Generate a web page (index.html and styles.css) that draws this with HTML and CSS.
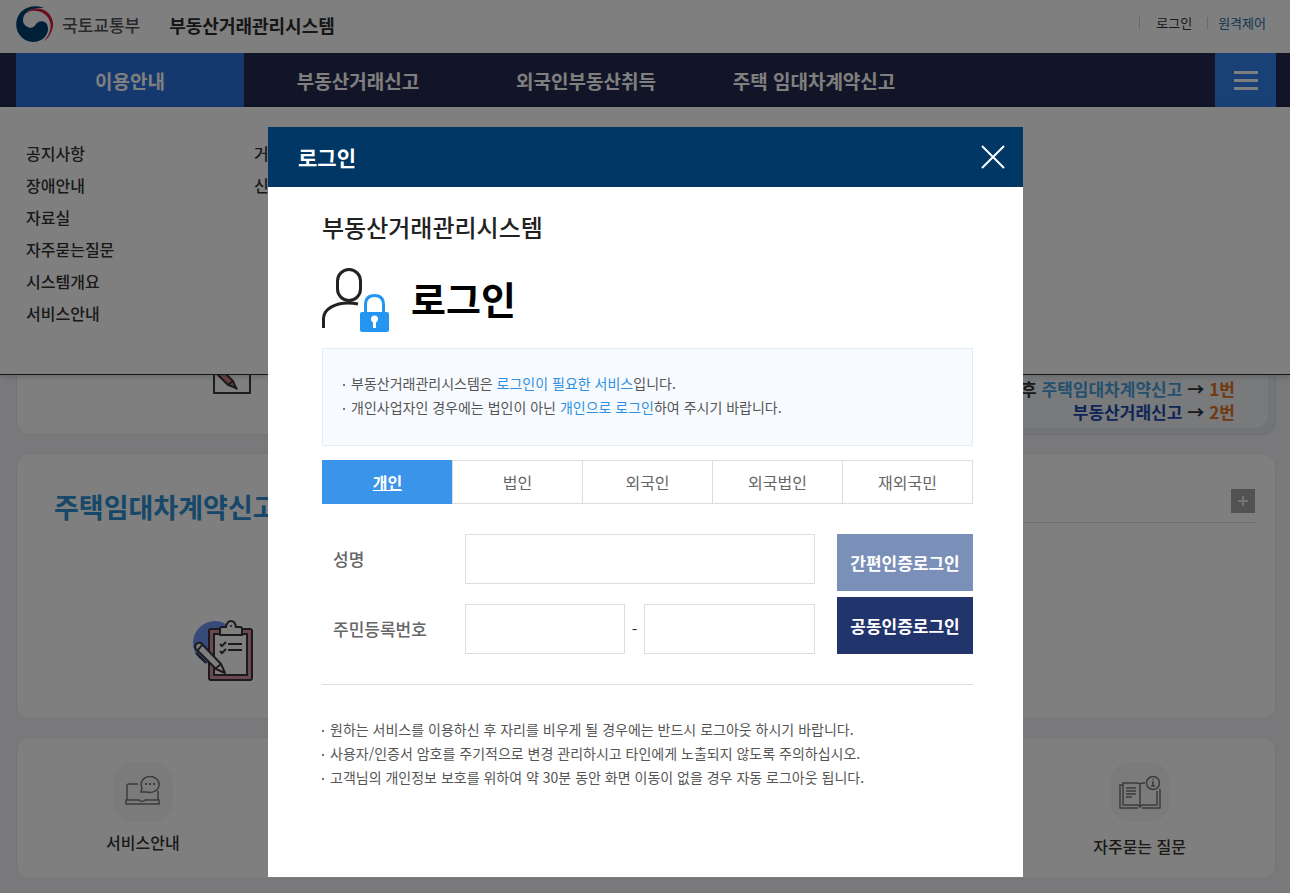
FILE: index.html
```html
<!DOCTYPE html>
<html lang="ko">
<head>
<meta charset="utf-8">
<meta name="viewport" content="width=device-width, initial-scale=1">
<title>부동산거래관리시스템</title>
<link rel="stylesheet" href="styles.css">
</head>
<body>
<header class="site-header">
  <div class="top-bar">
    <a class="brand" href="#">
      <svg class="emblem" viewBox="0 0 38 38" aria-hidden="true">
        <path fill="#00406e" d="M28 2C20-1 11 0 5 6-1 12-1 22 3 28c5 8 15 10 22 6 7-4 9-12 5-17-3-3-8-2-10 1-2 4-6 5-10 2-4-3-4-9 0-13 5-5 12-5 18-5z"/>
        <path fill="#d01c3c" d="M8 9C13 3 21 1 28 4c8 4 11 13 8 20-2 6-5 9-9 12 6-6 9-14 7-20-2-7-8-11-14-11-5-1-9 1-12 4z"/>
      </svg>
      <span class="ministry">국토교통부</span>
      <span class="system-name">부동산거래관리시스템</span>
    </a>
    <nav class="util">
      <a href="#">로그인</a>
      <a class="remote" href="#">원격제어</a>
    </nav>
  </div>
  <nav class="gnb">
    <a class="gnb-item current" href="#">이용안내</a>
    <a class="gnb-item" href="#">부동산거래신고</a>
    <a class="gnb-item" href="#">외국인부동산취득</a>
    <a class="gnb-item" href="#">주택 임대차계약신고</a>
    <button class="all-menu" type="button" aria-label="전체메뉴"><span></span><span></span><span></span></button>
  </nav>
  <div class="submenu">
    <ul>
      <li><a href="#">공지사항</a></li>
      <li><a href="#">장애안내</a></li>
      <li><a href="#">자료실</a></li>
      <li><a href="#">자주묻는질문</a></li>
      <li><a href="#">시스템개요</a></li>
      <li><a href="#">서비스안내</a></li>
    </ul>
    <ul>
      <li><a href="#">거래</a></li>
      <li><a href="#">신고</a></li>
    </ul>
  </div>
</header>

<main class="content">
  <section class="row row-report">
    <div class="card report-card">
      <svg class="report-icon" viewBox="0 0 38 60" aria-hidden="true">
        <rect x="1" y="1" width="36" height="58" fill="none" stroke="#3c3c40" stroke-width="2"/>
        <path d="M2 38l5-4 13 13 3 7-8-3z" fill="#c98088" stroke="#333" stroke-width="2"/>
        <path d="M15 51l5-4M22 53l2 2" stroke="#333" stroke-width="2"/>
      </svg>
    </div>
    <div class="card phone-card">
      <div class="phone-panel">
        <p><span>후</span> <span class="sky">주택임대차계약신고</span> <span>→</span> <span class="num">1번</span></p>
        <p><span class="navy">부동산거래신고</span> <span>→</span> <span class="num">2번</span></p>
      </div>
    </div>
  </section>

  <section class="row row-lease">
    <div class="card lease-card">
      <h2>주택임대차계약신고</h2>
      <svg class="lease-icon" viewBox="0 0 61 62" aria-hidden="true">
        <circle cx="22" cy="23" r="22" fill="#6c97f4"/>
        <rect x="16" y="9" width="43" height="51" rx="2" fill="#d4949c" stroke="#38343a" stroke-width="2"/>
        <path d="M21 14h33v41H21z" fill="#fff" stroke="#38343a" stroke-width="2"/>
        <path d="M27 15V9q0-2 2-2h4q1-6 5-6t5 6h4q2 0 2 2v6z" fill="#fff" stroke="#38343a" stroke-width="2"/>
        <circle cx="38" cy="6" r="1" fill="#38343a"/>
        <path d="M27 24l2 2 4-4M27 31l2 2 4-4M35 24h14M35 30h14" fill="none" stroke="#38343a" stroke-width="2"/>
        <path d="M2 27q1-5 6-4l20 21 4 9-9-4L3 29z" fill="#fff" stroke="#38343a" stroke-width="2" stroke-linejoin="round"/>
        <path d="M5 30l4-5M22 49l6-5M3 33l10 10" fill="none" stroke="#38343a" stroke-width="2"/>
      </svg>
    </div>
    <div class="card board-card">
      <div class="board-head">
        <button class="more" type="button" aria-label="더보기"><svg viewBox="0 0 24 24" aria-hidden="true"><path d="M12 7v10M7 12h10" stroke="#e8e8e8" stroke-width="2"/></svg></button>
      </div>
    </div>
  </section>

  <section class="card quick">
    <a class="quick-item" href="#">
      <span class="quick-tile">
        <svg width="36" height="32" viewBox="0 0 36 32" fill="none" stroke="#77777b" stroke-width="1.5" aria-hidden="true">
          <path d="M13 8H4q-2 0-2 2v14M33 15v9M1 24h13q3 3 6 0h14v4H1z"/>
          <path d="M16 16l1-4a9 8 0 1 1 5 4z"/>
          <path d="M20 8h2M24 8h2M28 8h2" stroke-width="2"/>
        </svg>
      </span>
      <span>서비스안내</span>
    </a>
    <a class="quick-item wide-gap" href="#">
      <span class="quick-tile">
        <svg width="42" height="34" viewBox="0 0 42 34" fill="none" stroke="#77777b" stroke-width="1.5" aria-hidden="true">
          <path d="M21 31V9q-1-1-3-1H4v22h15l2 2 2-2h15V16M21 9q1-1 5-1M4 10H1v23h18M23 33h18V14M7 13h10M7 16h10M7 19h10M7 22h6"/>
          <circle cx="34" cy="8" r="6.500"/>
          <path d="M34 4v1M33 7h1v4M32 11h4"/>
        </svg>
      </span>
      <span>자주묻는 질문</span>
    </a>
  </section>
</main>

<div class="dim">
  <div class="modal" role="dialog" aria-modal="true" aria-labelledby="modal-title">
    <div class="modal-head">
      <h2 id="modal-title">로그인</h2>
      <button class="close" type="button" aria-label="닫기"><svg viewBox="0 0 24 24" aria-hidden="true"><path d="M1 1l22 22M23 1L1 23" stroke="#fff" stroke-width="2"/></svg></button>
    </div>
    <div class="modal-body">
      <p class="service">부동산거래관리시스템</p>
      <div class="login-title">
        <svg class="user-lock" viewBox="0 0 67 64" aria-hidden="true">
          <rect x="15.500" y="1.500" width="23" height="31" rx="11.500" fill="none" stroke="#222" stroke-width="3"/>
          <path d="M1.500 60V50C2 41 13 35 26 35q6 0 10 1" fill="none" stroke="#222" stroke-width="3"/>
          <path d="M43.500 46V37q0-9.500 9-9.500t9 9.500v9" fill="none" stroke="#2496f2" stroke-width="3"/>
          <rect x="38" y="44" width="29" height="20" rx="2" fill="#2496f2"/>
          <circle cx="52.500" cy="51" r="3.500" fill="#fff"/>
          <path d="M51 52h3v8h-3z" fill="#fff"/>
        </svg>
        <h1>로그인</h1>
      </div>
      <ul class="bullets notice">
        <li>부동산거래관리시스템은 <em>로그인이 필요한 서비스</em>입니다.</li>
        <li>개인사업자인 경우에는 법인이 아닌 <em>개인으로 로그인</em>하여 주시기 바랍니다.</li>
      </ul>
      <div class="tabs" role="tablist">
        <button type="button" role="tab" aria-selected="true" class="tab active">개인</button>
        <button type="button" role="tab" aria-selected="false" class="tab">법인</button>
        <button type="button" role="tab" aria-selected="false" class="tab">외국인</button>
        <button type="button" role="tab" aria-selected="false" class="tab">외국법인</button>
        <button type="button" role="tab" aria-selected="false" class="tab">재외국민</button>
      </div>
      <form class="login-form">
        <div class="fields">
          <label for="user-name">성명</label>
          <input id="user-name" type="text">
          <label for="rrn-front">주민등록번호</label>
          <div class="rrn">
            <input id="rrn-front" type="text">
            <span>-</span>
            <input type="password" aria-label="주민등록번호 뒷자리">
          </div>
        </div>
        <div class="actions">
          <button type="button" class="simple">간편인증로그인</button>
          <button type="button" class="joint">공동인증로그인</button>
        </div>
      </form>
      <ul class="bullets notes">
        <li>원하는 서비스를 이용하신 후 자리를 비우게 될 경우에는 반드시 로그아웃 하시기 바랍니다.</li>
        <li>사용자/인증서 암호를 주기적으로 변경 관리하시고 타인에게 노출되지 않도록 주의하십시오.</li>
        <li>고객님의 개인정보 보호를 위하여 약 30분 동안 화면 이동이 없을 경우 자동 로그아웃 됩니다.</li>
      </ul>
    </div>
  </div>
</div>
</body>
</html>
```
FILE: styles.css
```css
* { box-sizing: border-box; }

body {
  margin: 0;
  background: #f3f3f7;
  color: #333;
  font-family: "Noto Sans CJK KR", "Noto Sans", sans-serif;
  font-size: 16px;
  line-height: 24px;
}

h1, h2, p, ul { margin: 0; padding: 0; }
ul { list-style: none; }
a { color: inherit; text-decoration: none; }
button, input { font: inherit; border-radius: 0; }
button { padding: 0; border: 0; cursor: pointer; }
svg { display: block; }

/* header */
.site-header { position: relative; background: #fff; }

.top-bar {
  display: flex;
  align-items: center;
  justify-content: space-between;
  height: 53px;
  padding: 0 24px 4px 16px;
}

.brand { display: flex; align-items: center; }
.emblem { width: 38px; height: 38px; }
.ministry { margin-left: 8px; font-size: 17px; font-weight: 500; color: #555; }
.system-name { margin-left: 29px; font-size: 18px; font-weight: 700; color: #2c2c2c; }

.util { display: flex; padding-bottom: 4px; font-size: 13px; line-height: 12px; color: #333; }
.util a { padding: 0 0 0 16px; border-left: 1px solid #d0d0d0; }
.util .remote { margin-left: 15px; padding-left: 10px; color: #1c6ea8; }

.gnb {
  display: flex;
  height: 54px;
  padding: 0 14px 0 16px;
  background: #24284e;
}

.gnb-item {
  width: 228px;
  color: #fff;
  font-size: 19px;
  font-weight: 700;
  line-height: 56px;
  text-align: center;
}
.gnb-item.current { background: #2a70dc; }

.all-menu {
  display: flex;
  flex-direction: column;
  align-items: center;
  justify-content: center;
  gap: 5px;
  width: 61px;
  margin-left: auto;
  background: #3280ee;
}
.all-menu span { width: 24px; height: 3px; background: #fff; }

.submenu {
  position: absolute;
  top: 100%;
  left: 0;
  right: 0;
  display: flex;
  height: 268px;
  padding: 30px 16px;
  background: #fff;
  border-bottom: 1px solid #2c2c34;
  box-shadow: 0 2px 6px rgba(0, 0, 0, .15);
}
.submenu ul { width: 228px; padding-left: 10px; }
.submenu li { font-weight: 500; line-height: 32px; }

/* page content */
.content {
  display: flex;
  flex-direction: column;
  gap: 18px;
  padding: 20px 14px 14px 16px;
}

.row { display: grid; grid-template-columns: 1fr 1fr; }

.card {
  background: #fff;
  border: 1px solid #eaeaee;
  border-radius: 14px;
}

.row .card:first-child { border-right: 0; border-radius: 14px 0 0 14px; }
.row .card:last-child { border-left: 0; border-radius: 0 14px 14px 0; }

.row-report { min-height: 308px; }
.report-card { display: flex; align-items: flex-end; padding: 0 0 40px 196px; }
.report-icon { width: 38px; height: 60px; }

.phone-card { padding: 0 7px 6px 0; background: #e2eaee; border-color: #d4dce2; }
.phone-panel {
  display: flex;
  flex-direction: column;
  justify-content: flex-end;
  height: 100%;
  padding: 0 33px 5px 0;
  background: #f0f4f6;
  border-radius: 0 0 14px 0;
  font-size: 17px;
  font-weight: 700;
  line-height: 23px;
}
.phone-panel p { display: flex; justify-content: flex-end; gap: 5px; }
.sky { color: #4a9fdc; }
.navy { color: #1c4cae; }
.num { color: #e0742a; }

.row-lease { min-height: 266px; }
.lease-card { padding: 34px 0 36px 37px; }
.lease-card h2 { color: #2f8ed2; font-size: 27px; font-weight: 700; line-height: 38px; }
.lease-icon { width: 61px; height: 62px; margin: 94px 0 0 139px; }

.board-card { padding: 35px 18px 0 0; }
.board-head {
  display: flex;
  justify-content: flex-end;
  padding: 0 2px 9px 0;
  border-bottom: 1px solid #e0e0e0;
}
.more { width: 24px; height: 24px; background: #a4a4a4; }

.quick {
  display: flex;
  justify-content: space-between;
  min-height: 142px;
  padding: 24px 89px 18px;
}
.quick-item {
  display: flex;
  flex-direction: column;
  align-items: center;
  gap: 8px;
  font-weight: 500;
}
.wide-gap { gap: 12px; }
.quick-tile {
  display: grid;
  place-items: center;
  width: 60px;
  height: 60px;
  border-radius: 20px;
  background: #f7f7f8;
}

/* login layer */
.dim {
  position: fixed;
  inset: 0;
  display: flex;
  align-items: flex-start;
  justify-content: center;
  padding: 127px 0 0 1px;
  background: rgba(0, 0, 0, .5);
}

.modal { width: 755px; max-width: 100%; background: #fff; }

.modal-head {
  display: flex;
  align-items: center;
  justify-content: space-between;
  height: 60px;
  padding: 0 18px 0 30px;
  background: #003764;
  color: #fff;
}
.modal-head h2 { font-size: 21px; font-weight: 700; }
.close { width: 24px; height: 24px; background: none; }

.modal-body { padding: 24px 50px 88px 54px; }

.service { color: #222; font-size: 24px; font-weight: 500; line-height: 32px; }

.login-title { display: flex; align-items: center; gap: 22px; margin-top: 25px; }
.user-lock { width: 67px; height: 64px; }
.login-title h1 { padding-bottom: 4px; color: #000; font-size: 38px; font-weight: 700; line-height: 60px; }

.bullets { color: #555; font-size: 14px; }
.bullets li { position: relative; padding-left: 8px; }
.bullets li::before {
  content: "";
  position: absolute;
  top: 13px;
  left: 0;
  width: 2px;
  height: 2px;
  background: #777;
}
.bullets em { color: #2f90e0; font-style: normal; }

.notice {
  margin-top: 16px;
  padding: 22px 20px 26px;
  border: 1px solid #e4ebf2;
  background: #f7faff;
}

.tabs { display: grid; grid-template-columns: repeat(5, 1fr); margin-top: 14px; padding-left: 1px; }
.tab {
  height: 44px;
  margin-left: -1px;
  border: 1px solid #ddd;
  background: #fff;
  color: #666;
}
.tab.active {
  border-color: #3a94ea;
  background: #3a94ea;
  color: #fff;
  font-weight: 700;
  text-decoration: underline;
}

.login-form {
  display: flex;
  gap: 22px;
  margin-top: 30px;
  padding-bottom: 30px;
  border-bottom: 1px solid #ddd;
}
.fields {
  flex: 1;
  display: grid;
  grid-template-columns: 132px 1fr;
  row-gap: 20px;
  align-items: center;
  padding-left: 11px;
}
.fields label { color: #666; font-size: 17px; font-weight: 500; }
.fields input {
  width: 100%;
  min-width: 0;
  height: 50px;
  padding: 0 12px;
  border: 1px solid #ddd;
  background: #fff;
}
.rrn { display: grid; grid-template-columns: 160px 19px 1fr; align-items: center; text-align: center; }

.actions { display: flex; flex-direction: column; gap: 6px; width: 136px; }
.actions button { height: 57px; color: #fff; font-size: 17px; font-weight: 700; }
.simple { background: #7a90b8; }
.joint { background: #21346c; }

.notes { margin-top: 32px; }
```
